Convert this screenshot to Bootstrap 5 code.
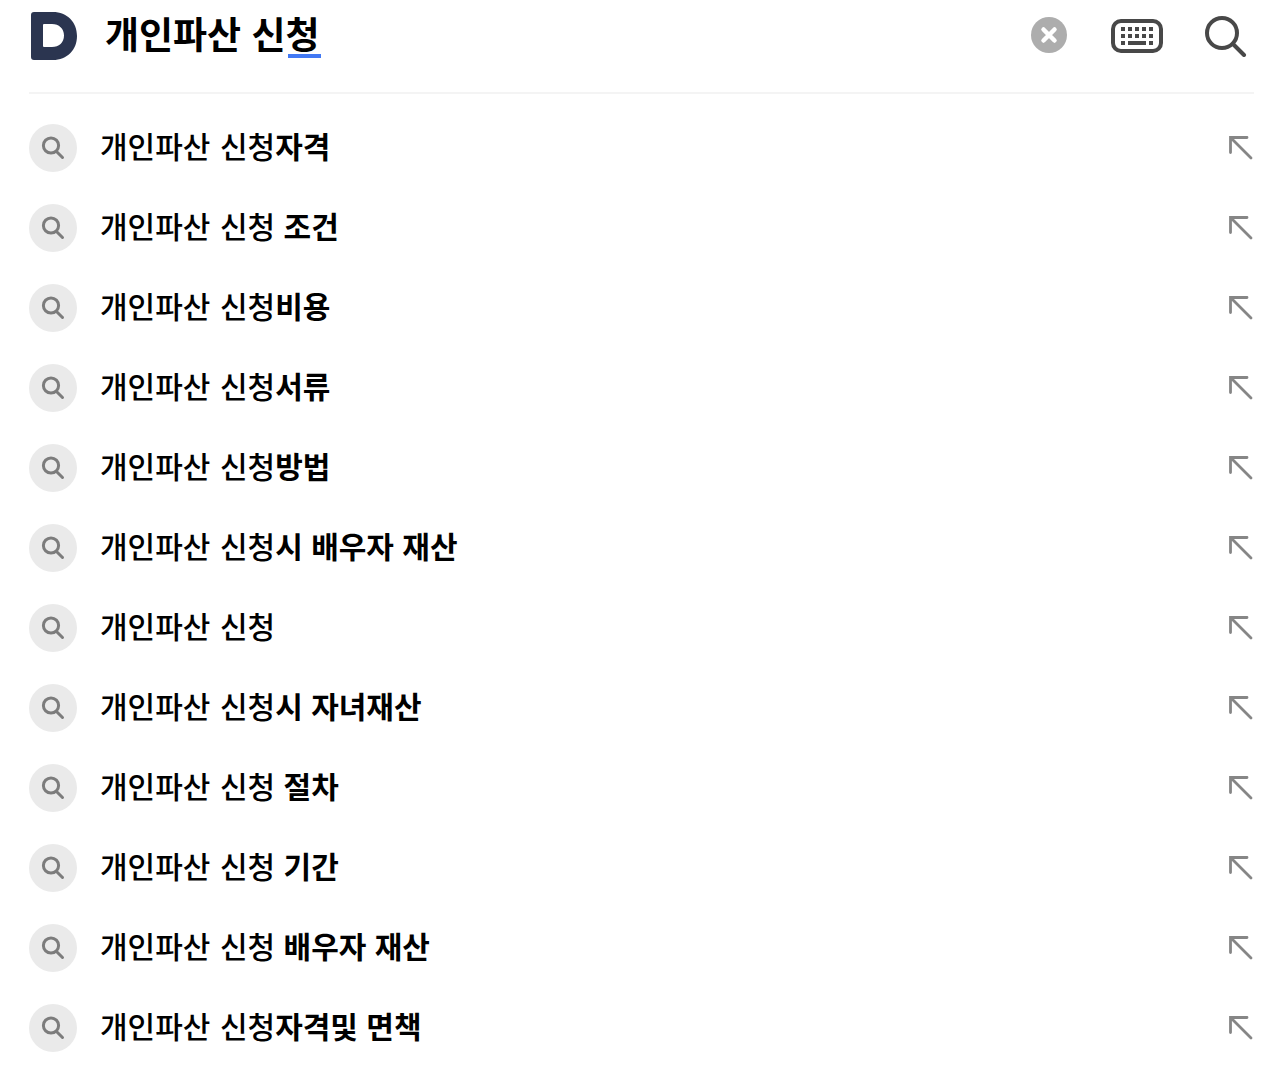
<!DOCTYPE html>
<html lang="ko">
<head>
<meta charset="utf-8">
<meta name="viewport" content="width=device-width, initial-scale=1">
<title>개인파산 신청</title>
<link href="https://cdn.jsdelivr.net/npm/bootstrap@5.3.0/dist/css/bootstrap.min.css" rel="stylesheet">
<style>
  body { font-family: "Noto Sans CJK KR", sans-serif; color: #000; background: #fff; }
  svg { display: block; flex: none; }
  .page-pad { padding-left: 29px; padding-right: 30px; }
  .search-bar { height: 94px; padding-bottom: 20px; border-bottom: 2px solid #f4f4f4; }
  .query {
    font-size: 37px; line-height: 42px; height: 48px; margin-left: 28px; padding: 0 0 6px; color: #000; outline: 0;
    /* underline below the syllable being composed */
    background: linear-gradient(#4279f4, #4279f4) 183px 42px / 33px 4px no-repeat;
  }
  .tools { gap: 42px; padding-right: 7px; }
  .suggestions { padding-top: 14px; }
  .suggestion { height: 80px; font-size: 30px; line-height: 44px; }
  .suggestion a { gap: 23px; color: #000; }
  .phrase { padding-bottom: 4px; }
  .typed { font-family: "DejaVu Sans", "Noto Sans CJK KR", sans-serif; font-weight: 500; }
  .lens { width: 48px; height: 48px; background: #eaeaea; }
</style>
<script src="https://cdn.jsdelivr.net/npm/bootstrap@5.3.0/dist/js/bootstrap.bundle.min.js"></script>
</head>
<body>
<svg width="0" height="0" class="position-absolute" aria-hidden="true">
  <symbol id="lens" viewBox="0 0 24 24"><g fill="none" stroke="#7c7c7c" stroke-width="3"><circle cx="10" cy="9.500" r="7.600"/><path d="M15.500 15.500 21.500 21.500" stroke-linecap="round"/></g></symbol>
  <symbol id="fill" viewBox="0 0 26 26"><path d="M2.500 17.500V2.500H19M3 3 23 23" fill="none" stroke="#868686" stroke-width="2.800" stroke-linecap="round"/></symbol>
</svg>
<div class="page-pad">
  <header>
    <form class="search-bar d-flex align-items-center" role="search" onsubmit="return false">
      <a href="#" aria-label="Daum">
        <svg width="48" height="48" viewBox="0 0 48 48"><path fill="#2b3550" fill-rule="evenodd" d="M5 0H24C38 0 48 10 48 24S38 48 24 48H5Q2 48 2 45V3Q2 0 5 0ZM15 12Q14 12 14 13V34Q14 35 15 35H23C30 35 35 30.500 35 23.500S30 12 23 12Z"/></svg>
      </a>
      <input class="query flex-grow-1 border-0 fw-bold" type="text" value="개인파산 신청" aria-label="검색어">
      <div class="tools d-flex align-items-center">
        <button class="btn p-0 border-0" type="reset" aria-label="지우기">
          <svg width="38" height="38" viewBox="0 0 38 38"><circle cx="18" cy="18" r="18" fill="#adadad"/><path d="m12.500 12.500 11 11m0-11-11 11" stroke="#fff" stroke-width="4.500" stroke-linecap="round"/></svg>
        </button>
        <button class="btn p-0 border-0" type="button" aria-label="키보드">
          <svg width="52" height="36" viewBox="0 0 52 36"><rect x="2" y="3" width="48" height="30" rx="8" fill="none" stroke="#484848" stroke-width="4"/><path d="M10 11h4m3 0h4m3 0h4m3 0h4m3 0h4M10 18h4m3 0h4m3 0h4m3 0h4m3 0h4M10 25h4m3 0h18m3 0h4" stroke="#484848" stroke-width="4"/></svg>
        </button>
        <button class="btn p-0 border-0" type="submit" aria-label="검색">
          <svg width="42" height="42" viewBox="0 0 42 42"><g fill="none" stroke="#484848" stroke-width="4"><circle cx="17" cy="18" r="15"/><path d="M28 29 39 40" stroke-linecap="round"/></g></svg>
        </button>
      </div>
    </form>
  </header>
  <ul class="suggestions list-unstyled mb-0" id="list"></ul>
</div>
<script>
  const typed = "개인파산 신청";
  const endings = ["자격", " 조건", "비용", "서류", "방법", "시 배우자 재산", "", "시 자녀재산", " 절차", " 기간", " 배우자 재산", "자격및 면책"];
  document.getElementById("list").innerHTML = endings.map(e => `
    <li class="suggestion d-flex align-items-center justify-content-between">
      <a href="#" class="d-flex align-items-center text-decoration-none flex-grow-1">
        <span class="lens rounded-circle d-flex align-items-center justify-content-center"><svg width="24" height="24"><use href="#lens"/></svg></span>
        <span class="phrase"><span class="typed">${typed}</span><strong>${e}</strong></span>
      </a>
      <button class="btn p-0 border-0" type="button" aria-label="${typed}${e} 입력"><svg width="26" height="26"><use href="#fill"/></svg></button>
    </li>`).join("");
</script>
</body>
</html>
